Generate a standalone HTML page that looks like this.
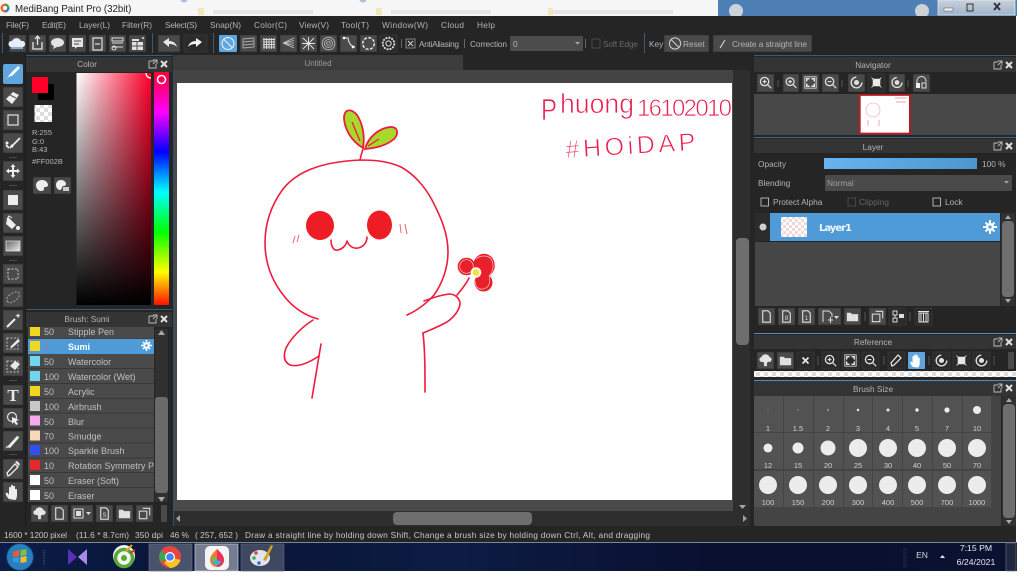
<!DOCTYPE html>
<html><head><meta charset="utf-8"><title>MediBang Paint Pro</title>
<style>
html,body{margin:0;padding:0;background:#fff;width:1024px;height:583px;overflow:hidden}
svg{display:block;position:absolute;left:0;top:0;filter:blur(.3px)}
text{font-family:"Liberation Sans",sans-serif;font-size:8.3px;fill:#b4b4b4}
.b{fill:#4a4a4a;stroke:#2c2c2c;stroke-width:.6}
.d{fill:#2b2b2b;stroke:#3c3c3c;stroke-width:.6}
.h{fill:#343434}
.c{text-anchor:middle}
.i{fill:#dedede}
.s{fill:none;stroke:#dedede;stroke-width:1.2}
.w{fill:none;stroke:#b0b0b0;stroke-width:1}
.r{fill:none;stroke:#ee1c3c;stroke-linecap:round;stroke-linejoin:round;stroke-width:1.6}
.n{font-size:9px;fill:#c0c0c0}
.z{font-size:7.5px;fill:#d0d0d0;text-anchor:middle}
.hw{fill:#ee1c4c;stroke:#fff;stroke-width:.7}
</style></head><body>
<svg width="1024" height="583" viewBox="0 0 1024 583" xmlns="http://www.w3.org/2000/svg">
<defs>
<linearGradient id="gw" x1="0" x2="1" y1="0" y2="0"><stop offset="0" stop-color="#fff"/><stop offset="1" stop-color="#ff002b"/></linearGradient>
<linearGradient id="gk" x1="0" x2="0" y1="0" y2="1"><stop offset="0" stop-color="#000" stop-opacity="0"/><stop offset="1" stop-color="#000"/></linearGradient>
<linearGradient id="gh" x1="0" x2="0" y1="0" y2="1"><stop offset="0" stop-color="#ff0030"/><stop offset=".172" stop-color="#ff00ff"/><stop offset=".343" stop-color="#0000ff"/><stop offset=".515" stop-color="#00ffff"/><stop offset=".687" stop-color="#00ff00"/><stop offset=".858" stop-color="#ffff00"/><stop offset="1" stop-color="#ff1000"/></linearGradient>
<linearGradient id="gt" x1="0" x2="1" y1="0" y2="0"><stop offset="0" stop-color="#0b1d48"/><stop offset=".2" stop-color="#0a1436"/><stop offset=".45" stop-color="#0c1c44"/><stop offset=".7" stop-color="#0a1030"/><stop offset="1" stop-color="#0b1130"/></linearGradient>
<linearGradient id="gb" x1="0" x2="1" y1="0" y2="0"><stop offset="0" stop-color="#68b4ee"/><stop offset="1" stop-color="#4d96d0"/></linearGradient>
<linearGradient id="gg" x1="0" x2="1" y1="0" y2="1"><stop offset="0" stop-color="#666"/><stop offset="1" stop-color="#eee"/></linearGradient>
<linearGradient id="gwc" x1="0" x2="0" y1="0" y2="1"><stop offset="0" stop-color="#c8d2dc"/><stop offset="1" stop-color="#9fb2c6"/></linearGradient>
<pattern id="chk" width="8" height="8" patternUnits="userSpaceOnUse"><rect width="8" height="8" fill="#fff"/><rect width="4" height="4" fill="#ddd"/><rect x="4" y="4" width="4" height="4" fill="#ddd"/></pattern>
<pattern id="chp" width="6" height="6" patternUnits="userSpaceOnUse"><rect width="6" height="6" fill="#fff"/><rect width="3" height="3" fill="#f0d8d8"/><rect x="3" y="3" width="3" height="3" fill="#f0d8d8"/></pattern>
<symbol id="doc" viewBox="0 0 18 18"><path d="M5 3h5.5L13 5.5V15H5z" fill="none" stroke="#dedede" stroke-width="1.2"/></symbol>
<symbol id="up" viewBox="0 0 18 18"><circle cx="9" cy="7" r="4.6" fill="#e4e4e4"/><circle cx="5" cy="8" r="2.5" fill="#e4e4e4"/><circle cx="13" cy="8" r="2.5" fill="#e4e4e4"/><path d="M7.5 10h3v5h-3z" fill="#e4e4e4"/></symbol>
<symbol id="folder" viewBox="0 0 18 18"><path d="M3 5h4l1.5 1.5H15V14H3z" fill="#e0e0e0"/></symbol>
<symbol id="copy" viewBox="0 0 18 18"><path d="M7 3.5h7.5V11M3.5 6.5h8v8h-8z" fill="none" stroke="#dedede" stroke-width="1.1"/></symbol>
<symbol id="zi" viewBox="0 0 18 18"><circle cx="8" cy="8" r="4.4" fill="none" stroke="#dedede" stroke-width="1.4"/><path d="M11.2 11.2L15 15M6 8h4M8 6v4" stroke="#dedede" stroke-width="1.3"/></symbol>
<symbol id="zo" viewBox="0 0 18 18"><circle cx="8" cy="8" r="4.4" fill="none" stroke="#dedede" stroke-width="1.4"/><path d="M11.2 11.2L15 15M6 8h4" stroke="#dedede" stroke-width="1.3"/></symbol>
<symbol id="fit" viewBox="0 0 18 18"><rect x="3" y="3" width="12" height="12" fill="none" stroke="#dedede" stroke-width=".9"/><path d="M5 8V5h3M13 8V5h-3M5 10v3h3M13 10v3h-3" fill="none" stroke="#fff" stroke-width="1.3"/></symbol>
<symbol id="rot" viewBox="0 0 18 18"><circle cx="9" cy="9" r="5.6" fill="none" stroke="#dedede" stroke-width="1.5" stroke-dasharray="26 9"/><circle cx="9" cy="9" r="2.7" fill="#dedede"/></symbol>
<symbol id="fill" viewBox="0 0 18 18"><path d="M3 3l3 2h6l3-2-2 3v6l2 3-3-2H6l-3 2 2-3V6z" fill="#e8e8e8"/></symbol>
<symbol id="gear" viewBox="0 0 14 14"><g fill="#fff"><circle cx="7" cy="7" r="4"/><path d="M6 0h2v14H6zM0 6h14v2H0z"/><path d="M1.8 3.2l1.4-1.4 9 9-1.4 1.4zM10.800 1.800l1.400 1.400-9 9-1.400-1.400z"/></g><circle cx="7" cy="7" r="1.6" fill="#4e9bd8"/></symbol>
</defs>

<!-- title bar -->
<rect x="0" y="0" width="1017" height="16" fill="#f6f6f6"/>
<circle cx="184" cy="-1" r="3.500" fill="#a8c0d8"/><circle cx="363" cy="-1" r="3.500" fill="#a8c0d8"/>
<rect x="198" y="8" width="6" height="7" fill="#f0e8b8"/><rect x="376" y="8" width="6" height="7" fill="#f0e8b8"/>
<rect x="213" y="10" width="100" height="4" fill="#e6e6e6"/><rect x="391" y="10" width="100" height="4" fill="#e6e6e6"/>
<rect x="553" y="10" width="120" height="4" fill="#e6e6e6"/><rect x="548" y="8" width="5" height="7" fill="#f0e8b8"/>
<rect x="718" y="0" width="299" height="16" fill="#4f80b5"/>
<circle cx="736" cy="11" r="7" fill="#ccd2d8"/><circle cx="922" cy="11" r="7" fill="#ccd2d8"/>
<rect x="938" y="0" width="77" height="15" fill="url(#gwc)" stroke="#e8eef4" stroke-width=".7"/>
<path d="M967 4h6v7h-6z" fill="none" stroke="#333" stroke-width="1"/><rect x="944" y="8" width="9" height="3" fill="#f0f0f0" stroke="#556" stroke-width=".5"/>
<path d="M994 3l6 7M1000 3l-6 7" stroke="#334" stroke-width="2"/>
<circle cx="5" cy="8" r="4.500" fill="#ef6a2c"/><path d="M5 3.500a4.500 4.500 0 0 1 4.500 4.500H5z" fill="#3aa85c"/><path d="M5 8h4.500a4.500 4.500 0 0 1-4.500 4.500z" fill="#3a78d8"/><circle cx="5" cy="8" r="2" fill="#fff"/>
<text x="15" y="12" style="font-size:9.700px;fill:#222">MediBang Paint Pro (32bit)</text>

<!-- main dark -->
<rect x="0" y="16" width="1016" height="527" fill="#252525"/>
<!-- menu -->
<text x="6" y="28" textLength="23">File(F)</text><text x="42" y="28" textLength="24">Edit(E)</text><text x="79" y="28" textLength="31">Layer(L)</text><text x="122" y="28" textLength="30">Filter(R)</text><text x="165" y="28" textLength="32">Select(S)</text><text x="210" y="28" textLength="31">Snap(N)</text><text x="254" y="28" textLength="33">Color(C)</text><text x="299" y="28" textLength="30">View(V)</text><text x="341" y="28" textLength="28">Tool(T)</text><text x="382" y="28" textLength="46">Window(W)</text><text x="441" y="28" textLength="23">Cloud</text><text x="477" y="28" textLength="18">Help</text>

<!-- top toolbar -->
<rect x="2" y="33" width="1" height="20" fill="#3c5a72"/>
<rect class="b" x="9" y="35" width="17" height="17"/><path d="M11 47a3 3 0 0 1 1-6 5 5 0 0 1 9 0 3 3 0 0 1 2 6z" fill="#e8eef6"/><path d="M11 47h12v2H11z" fill="#7eb4e4"/>
<rect class="b" x="29" y="35" width="17" height="17"/><path d="M33 42v7h9v-7M37.500 45v-8M35 39l2.500-3 2.500 3" fill="none" stroke="#e4e4e4" stroke-width="1.300"/>
<rect class="b" x="49" y="35" width="17" height="17"/><ellipse cx="57.500" cy="42.500" rx="6.500" ry="4.500" fill="#e4e4e4"/><path d="M54 46l-1 3 4-2z" fill="#e4e4e4"/>
<rect class="b" x="69" y="35" width="17" height="17"/><path d="M72 38h11v9h-6l-2 2v-2h-3z" fill="#e4e4e4"/><path d="M74 41h7M74 44h5" stroke="#4c4c4c"/>
<rect class="b" x="89" y="35" width="17" height="17"/><path d="M93 38h9v12h-9z" fill="none" stroke="#dedede" stroke-width="1.200"/><path d="M95 44h5" stroke="#dedede" stroke-width="1.200"/>
<rect class="b" x="109" y="35" width="17" height="17"/><path d="M112 38h11v3h-11zM112 43h11M112 47h11" fill="none" stroke="#dedede"/><circle cx="114" cy="48" r="2" fill="none" stroke="#dedede"/>
<rect class="b" x="129" y="35" width="17" height="17"/><path d="M132 42h11v8h-11zM132 39h7v2h-7z" fill="#e2e2e2"/><path d="M137 42v8M132 46h11" stroke="#4c4c4c"/><circle cx="143" cy="38" r="1" fill="#e2e2e2"/>
<rect x="152" y="33" width="1" height="20" fill="#3c5a72"/>
<rect class="b" x="158" y="35" width="22" height="17"/><path d="M163 42l6-4v3c4 0 7 2 8 6-2-2-4-3-8-3v3z" fill="#e8e8e8"/>
<rect class="d" x="184" y="35" width="23" height="17"/><path d="M202 42l-6-4v3c-4 0-7 2-8 6 2-2 4-3 8-3v3z" fill="#f2f2f2"/>
<rect x="213" y="33" width="1" height="20" fill="#3c5a72"/>
<rect x="219" y="35" width="18" height="17" rx="1" fill="#5ea6dd"/><circle cx="228" cy="43.500" r="6" fill="none" stroke="#e8f2fa" stroke-width="1.100"/><path d="M224 39.500l8 8" stroke="#e8f2fa" stroke-width="1.100"/>
<rect class="b" x="240" y="35" width="17" height="17"/><path d="M243 39l11-1M243 42l11-1M243 45l11-1M243 48l11-1M243 39v9M254 38v9" fill="none" stroke="#a8a8a8" stroke-width=".9"/>
<rect class="b" x="260" y="35" width="17" height="17"/><path d="M264 38v11M266.500 38v11M269 38v11M271.500 38v11M274 38v11M263 39.500h12M263 42h12M263 44.500h12M263 47h12" stroke="#dcdcdc" stroke-width=".9"/>
<rect class="b" x="280" y="35" width="17" height="17"/><path d="M283 43l11-5M283 43l11-2.500M283 43h11M283 43l11 2.500M283 43l11 5" stroke="#c4c4c4" stroke-width=".8"/>
<rect class="b" x="300" y="35" width="17" height="17"/><path d="M303 38l11 11M314 38l-11 11M308.500 37v13M302 43.500h13" stroke="#e4e4e4" stroke-width=".9"/>
<rect class="b" x="320" y="35" width="17" height="17"/><circle cx="328.500" cy="43.500" r="6.300" class="w"/><circle cx="328.500" cy="43.500" r="4" class="w"/><circle cx="328.500" cy="43.500" r="1.800" class="w"/>
<rect class="b" x="340" y="35" width="17" height="17"/><path d="M344 38h4l1 4c1 3 3 4 6 5" fill="none" stroke="#e4e4e4" stroke-width="1.100"/><circle cx="344" cy="38" r="1.300" fill="#fff"/><circle cx="353" cy="47" r="1.300" fill="#fff"/>
<rect class="b" x="360" y="35" width="17" height="17"/><circle cx="368.500" cy="43.500" r="5.800" fill="none" stroke="#f0f0f0" stroke-width="1.400" stroke-dasharray="3 1.500"/>
<rect class="d" x="380" y="35" width="17" height="17"/><circle cx="388.500" cy="43.500" r="5.800" fill="none" stroke="#e0e0e0" stroke-width="1.800" stroke-dasharray="2 1"/><circle cx="388.500" cy="43.500" r="2.600" fill="none" stroke="#e0e0e0"/>
<rect x="401" y="39" width="1" height="9" fill="#666"/>
<rect x="406" y="39" width="9" height="9" fill="#2a2a2a" stroke="#9a9a9a" stroke-width=".8"/><path d="M408 41l5 5M413 41l-5 5" stroke="#d0d0d0"/>
<text x="419" y="47" textLength="40">AntiAliasing</text>
<rect x="464" y="39" width="1" height="9" fill="#666"/>
<text x="470" y="47" textLength="37">Correction</text>
<rect x="510" y="36" width="73" height="15" rx="1" fill="#4c4c4c"/><text x="513" y="47">0</text><path d="M575 42h5l-2.500 2.500z" fill="#aaa"/>
<rect x="585" y="39" width="1" height="9" fill="#666"/>
<rect x="592" y="39" width="8" height="9" fill="none" stroke="#484848"/>
<text x="603" y="47" style="fill:#6a6a6a" textLength="35">Soft Edge</text>
<rect x="644" y="33" width="1" height="20" fill="#3c5a72"/>
<text x="649" y="47">Key</text>
<rect class="b" x="664" y="35" width="45" height="17"/><circle cx="675" cy="43.500" r="5.600" fill="none" stroke="#d0d0d0" stroke-width="1"/><path d="M671 39.500l8 8" stroke="#d0d0d0"/><text x="683" y="47">Reset</text>
<rect class="b" x="713" y="35" width="99" height="17"/><path d="M720 48l5-8" stroke="#d8d8d8" stroke-width="1.100"/><text x="732" y="47" textLength="75">Create a straight line</text>

<!-- left toolbar -->
<rect x="25" y="55" width="1" height="472" fill="#1c1c1c"/>
<rect x="3" y="64" width="20" height="20" rx="2" fill="#5ea6dd"/><path d="M7 80c0-3 3-4 5-4l8-8-2-2-8 8c-1 2-3 3-3 6z" fill="#fff"/>
<rect class="b" x="3" y="87" width="20" height="20"/><path d="M6 99l7-7 6 3-7 9z" fill="#eee"/><path d="M10 95l6 3" stroke="#4c4c4c"/>
<rect class="b" x="3" y="110" width="20" height="20"/><rect x="8" y="115" width="10" height="10" fill="none" stroke="#d8d8d8" stroke-width="1.300"/>
<rect class="b" x="3" y="133" width="20" height="20"/><path d="M6 145l3 3M10 148l10-10" stroke="#eee" stroke-width="1.800"/><circle cx="7" cy="143" r="1.500" fill="#eee"/><circle cx="12" cy="146" r="1.500" fill="#eee"/>
<rect x="9" y="157" width="8" height="1" fill="#4a4a4a"/>
<rect class="b" x="3" y="161" width="20" height="20"/><path d="M13 164l2.500 3h-1.500v3h3v-1.500l3 2.500-3 2.500V172h-3v3h1.500l-2.500 3-2.500-3h1.500v-3h-3v1.500l-3-2.500 3-2.500V170h3v-3h-1.500z" fill="#eee"/>
<rect x="9" y="185" width="8" height="1" fill="#4a4a4a"/>
<rect class="b" x="3" y="190" width="20" height="20"/><rect x="8" y="195" width="10" height="10" fill="#ececec"/>
<rect class="b" x="3" y="213" width="20" height="20"/><path d="M8 217l8 8-4 4-6-5 1-5z" fill="#eee"/><path d="M7 219l2-3 3 2" fill="none" stroke="#eee"/><circle cx="18" cy="228" r="2" fill="#eee"/>
<rect class="b" x="3" y="236" width="20" height="20"/><rect x="6" y="241" width="14" height="10" fill="url(#gg)" stroke="#ddd" stroke-width=".8"/>
<rect x="9" y="260" width="8" height="1" fill="#4a4a4a"/>
<rect class="b" x="3" y="264" width="20" height="20"/><rect x="8" y="269" width="10" height="10" fill="none" stroke="#c8c8c8" stroke-dasharray="2 1.500"/>
<rect class="b" x="3" y="287" width="20" height="20"/><path d="M8 302c-3-3 0-6 3-8s7-3 8-1 0 5-3 7-6 4-8 2z" fill="none" stroke="#a8a8a8" stroke-dasharray="2 1.500"/>
<rect class="b" x="3" y="310" width="20" height="20"/><path d="M7 327l8-8" stroke="#eee" stroke-width="2"/><path d="M18 313l.7 2 2 .7-2 .7-.7 2-.7-2-2-.7 2-.7z" fill="#eee"/>
<rect class="b" x="3" y="333" width="20" height="20"/><rect x="7" y="338" width="11" height="11" fill="none" stroke="#bbb" stroke-dasharray="2 1.500"/><path d="M10 347l8-8 2 2-8 7z" fill="#e8e8e8"/>
<rect class="b" x="3" y="356" width="20" height="20"/><rect x="7" y="361" width="11" height="11" fill="none" stroke="#bbb" stroke-dasharray="2 1.500"/><path d="M10 366l5-5 5 3-5 6z" fill="#e8e8e8"/>
<rect x="9" y="380" width="8" height="1" fill="#4a4a4a"/>
<rect class="b" x="3" y="385" width="20" height="20"/><text x="13" y="401" class="c" style="font:bold 17px 'Liberation Serif',serif;fill:#e8e8e8">T</text>
<rect class="b" x="3" y="408" width="20" height="20"/><circle cx="12" cy="417" r="4.500" class="s"/><path d="M12 417l7 3-3 1 2 3-2 1-2-3-2 2z" fill="#eee"/>
<rect class="b" x="3" y="431" width="20" height="20"/><path d="M7 447l9-10c2-2 4 0 2 2l-8 9z" fill="#eee"/><path d="M6 448l2-2" stroke="#eee"/>
<rect x="9" y="454" width="8" height="1" fill="#4a4a4a"/>
<rect class="b" x="3" y="459" width="20" height="20"/><path d="M8 476l-1-3 8-9 3 3-8 8z" fill="none" stroke="#eee" stroke-width="1.300"/><path d="M15 462l2-1 3 3-1 2z" fill="#eee"/>
<rect class="b" x="3" y="482" width="20" height="20"/><path d="M9 499c-2-2-4-5-3-6s2 0 3 2v-7c0-1.500 2-1.500 2 0v4-6c0-1.500 2-1.500 2 0v6-5c0-1.500 2-1.500 2 0v6-3c0-1.500 2-1.500 2 0v5c0 3-1 5-2 5z" fill="#eee"/>

<!-- color panel -->
<rect x="26" y="55" width="146" height="1" fill="#3c5a72"/>
<rect class="h" x="26" y="57" width="146" height="15"/>
<text x="87" y="67" class="c">Color</text>
<path d="M149 61h5m-5 0v7h7v-4M153 60h4v4M157 60l-4 4" fill="none" stroke="#bdbdbd" stroke-width=".9"/>
<path d="M161 61l6 6M167 61l-6 6" stroke="#e0e0e0" stroke-width="2"/>
<rect x="38" y="84" width="16" height="16" fill="#000"/>
<rect x="32" y="77" width="16" height="16" fill="#ff002b"/>
<rect x="34.500" y="105" width="17.500" height="17" fill="url(#chk)"/>
<text x="32" y="135" style="font-size:7.500px">R:255</text><text x="32" y="144" style="font-size:7.500px">G:0</text><text x="32" y="152" style="font-size:7.500px">B:43</text>
<text x="32" y="164" style="font-size:7.500px">#FF002B</text>
<rect class="b" x="33" y="177" width="18" height="17"/><path d="M42 180c4 0 6 3 6 5s-2 2-3 2-1 1-1 2-1 2-3 2c-3 0-5-3-5-6s3-5 6-5z" fill="#eee"/>
<rect class="b" x="54" y="177" width="17" height="17"/><path d="M61 180c3 0 5 2 5 4s-2 2-3 2-1 4-3 4-4-2-4-5 2-5 5-5z" fill="#eee"/><rect x="63" y="187" width="6" height="4" fill="#ccc"/>
<rect x="76.500" y="73" width="74.500" height="232" fill="url(#gw)"/>
<rect x="76.500" y="73" width="74.500" height="232" fill="url(#gk)"/>
<rect x="154" y="72" width="15" height="233" fill="url(#gh)"/>
<circle cx="161.500" cy="79.500" r="4" fill="none" stroke="#fff" stroke-width="1.600"/>
<path d="M146 73c0 3 2 5 5 5" fill="none" stroke="#fff" stroke-width="1.300"/>

<!-- brush panel -->
<rect x="26" y="309" width="146" height="1" fill="#3c5a72"/>
<rect class="h" x="26" y="312" width="146" height="15"/>
<text x="87" y="322" class="c">Brush: Sumi</text>
<path d="M149 316h5m-5 0v7h7v-4M153 315h4v4M157 315l-4 4" fill="none" stroke="#bdbdbd" stroke-width=".9"/>
<path d="M161 316l6 6M167 316l-6 6" stroke="#e0e0e0" stroke-width="2"/>
<rect x="28" y="327" width="126" height="175" fill="#4a4a4a"/>
<path d="M28 339h126M28 368.500h126M28 383.500h126M28 398.500h126M28 413h126M28 428h126M28 443h126M28 458h126M28 472.500h126M28 487.500h126" stroke="#333" stroke-width=".8"/>
<rect x="28" y="339" width="126" height="15" fill="#4e9bd8"/>
<rect x="30" y="327" width="10" height="9" fill="#f0d820"/><text x="44" y="335" class="n">50</text><text x="68" y="335" class="n">Stipple Pen</text>
<rect x="30" y="341" width="10" height="10" fill="#f0d820"/><text x="44" y="350" class="n" style="fill:#d86090">7</text><text x="68" y="350" class="n" style="fill:#fff;font-weight:bold">Sumi</text><use href="#gear" x="141" y="340" width="11" height="11"/>
<rect x="30" y="356" width="10" height="10" fill="#6fd8f0"/><text x="44" y="365" class="n">50</text><text x="68" y="365" class="n">Watercolor</text>
<rect x="30" y="371" width="10" height="10" fill="#6fd8f0"/><text x="44" y="380" class="n">100</text><text x="68" y="380" class="n">Watercolor (Wet)</text>
<rect x="30" y="386" width="10" height="10" fill="#f0d820"/><text x="44" y="395" class="n">50</text><text x="68" y="395" class="n">Acrylic</text>
<rect x="30" y="401" width="10" height="10" fill="#c8c8c8"/><text x="44" y="410" class="n">100</text><text x="68" y="410" class="n">Airbrush</text>
<rect x="30" y="415.500" width="10" height="10" fill="#f8a8f0"/><text x="44" y="425" class="n">50</text><text x="68" y="425" class="n">Blur</text>
<rect x="30" y="430.500" width="10" height="10" fill="#f8d8b8"/><text x="44" y="439.500" class="n">70</text><text x="68" y="439.500" class="n">Smudge</text>
<rect x="30" y="445" width="10" height="10" fill="#3050f0"/><text x="44" y="454" class="n">100</text><text x="68" y="454" class="n">Sparkle Brush</text>
<rect x="30" y="460" width="10" height="10" fill="#e82828"/><text x="44" y="469" class="n">10</text><text x="68" y="469" class="n" textLength="86" lengthAdjust="spacing">Rotation Symmetry P</text>
<rect x="30" y="475" width="10" height="10" fill="#fff"/><text x="44" y="484" class="n">50</text><text x="68" y="484" class="n">Eraser (Soft)</text>
<rect x="30" y="490" width="10" height="10" fill="#fff"/><text x="44" y="499" class="n">50</text><text x="68" y="499" class="n">Eraser</text>
<rect x="155" y="329" width="13" height="173" rx="2" fill="#303030"/>
<rect x="155" y="397" width="13" height="96" rx="3" fill="#6a6a6a"/>
<path d="M158 335l3.500-5 3.500 5zM158 497l3.500 5 3.500-5z" fill="#a8a8a8"/>
<rect class="b" x="31" y="505" width="17" height="17"/><use href="#up" x="31" y="505" width="17" height="17"/>
<rect class="b" x="51" y="505" width="17" height="17"/><use href="#doc" x="51" y="505" width="17" height="17"/>
<rect class="b" x="71" y="505" width="22" height="17"/><rect x="74" y="509" width="9" height="9" fill="none" stroke="#ddd"/><rect x="76" y="511" width="5" height="5" fill="#ddd"/><path d="M86 512h5l-2.500 3z" fill="#ddd"/>
<rect class="b" x="96" y="505" width="17" height="17"/><use href="#doc" x="96" y="505" width="17" height="17"/><text x="104.500" y="517" class="c" style="font-size:6px;fill:#ddd">S</text>
<rect class="b" x="116" y="505" width="17" height="17"/><use href="#folder" x="116" y="505" width="17" height="17"/>
<rect class="b" x="136" y="505" width="17" height="17"/><use href="#copy" x="136" y="505" width="17" height="17"/>
<rect x="161" y="505" width="6" height="17" rx="1" fill="#4a4a4a"/>

<!-- canvas tab + area -->
<rect x="173" y="55" width="290" height="15" fill="#3c3c3c"/>
<text x="318" y="66" class="c" style="fill:#9a9a9a;font-size:8px">Untitled</text>
<rect x="173" y="70" width="577" height="441" fill="#4a4a4a"/>
<rect x="173" y="70" width="577" height="13" fill="#444"/>
<rect x="177" y="83" width="555" height="417" fill="#fff"/>
<rect x="733" y="70" width="17" height="441" fill="#2e2e2e"/>
<rect x="736" y="238" width="13" height="107" rx="4" fill="#6e6e6e"/>
<path d="M739 505h7l-3.500 4z" fill="#a8a8a8"/>
<rect x="173" y="511" width="577" height="15" fill="#2e2e2e"/>
<rect x="173" y="70" width="1" height="456" fill="#2e5068"/>
<rect x="393" y="512" width="139" height="13" rx="4" fill="#6e6e6e"/>
<path d="M180 515v7l-4-3.500zM743 515v7l4-3.500z" fill="#a0a0a0"/>

<!-- drawing -->
<path class="r" d="M318 319C307 316 295 310 284 296C272 281 265 263 265 243C265 222 272 204 283 189C296 173 318 162 360 160C378 160 390 162 401 167C414 174 425 187 432 200C442 219 448 235 448 252C448 268 442 284 434 295C425 305 416 311 407 315"/>
<path class="r" d="M360 160C361 155 362 152 363 149"/>
<path class="r" d="M424 301C434 297 441 295 449 294C456 294 460 299 460 304C459 311 454 317 447 322C438 327 430 330 423 333"/>
<path class="r" d="M423 333C425 350 425 370 425 392"/>
<path class="r" d="M313 320C302 327 291 338 286 348C283 356 284 362 290 365C297 367 307 364 319 356"/>
<path class="r" d="M321 344C318 362 315 380 312 398"/>
<path d="M363 148C351 141 344 128 344 117C345 108 352 109 357 115C363 124 365 137 363 148Z" fill="#a8d82c" stroke="#ee1c3c" stroke-width="1.800"/>
<path d="M365 149C368 137 380 127 392 127C399 128 398 135 394 139C386 146 375 148 365 149Z" fill="#a8d82c" stroke="#ee1c3c" stroke-width="1.800"/>
<path d="M352 122L360 141M368 146L379 139" stroke="#ee1c3c" stroke-width="1.300" fill="none"/>
<ellipse cx="320" cy="225.500" rx="14" ry="14.500" fill="#ee1c24"/>
<ellipse cx="379.500" cy="225" rx="12.500" ry="14.500" fill="#ee1c24"/>
<path class="r" d="M331 240C331 247 334 251 338 250C342 249 346 246 347 241C349 246 353 249 358 248C363 247 367 243 367 237"/>
<path d="M295 236L293 243M299 235L297 242M400 224L401 233M405 224L407 234" stroke="#f06070" stroke-width="1" fill="none"/>
<path class="r" d="M469 278C465 286 461 290 457 295"/>
<ellipse cx="466.500" cy="266.500" rx="8.800" ry="8.800" fill="#e8202a"/>
<ellipse cx="484" cy="265.500" rx="10.800" ry="11.800" fill="#e8202a"/>
<circle cx="483.500" cy="282.500" r="9" fill="#e8202a"/>
<circle cx="466.500" cy="266.500" r="6.800" fill="none" stroke="#f8c8c8" stroke-width=".7"/>
<path d="M476 259c4-4 12-4 15 0s3 12-2 17M489 276c2 6 0 12-6 13s-8-4-8-8" fill="none" stroke="#f8c8c8" stroke-width=".7"/>
<circle cx="476" cy="272.500" r="5.300" fill="#fff"/><circle cx="476" cy="272.500" r="3.300" fill="#f8e030"/>
<text x="541" y="120" class="hw" style="font-size:31px" textLength="16" lengthAdjust="spacingAndGlyphs">P</text>
<text x="560" y="113" class="hw" style="font-size:28px" textLength="74" lengthAdjust="spacingAndGlyphs">huong</text>
<text x="637" y="116" class="hw" style="font-size:24px" textLength="95" lengthAdjust="spacing">16102010</text>
<text x="566" y="158" textLength="130" lengthAdjust="spacing" transform="rotate(-3.500 566 158)" class="hw" style="font-size:25px">#HOiDAP</text>

<!-- right panels -->
<rect x="754" y="55" width="262" height="1" fill="#3c5a72"/>
<rect class="h" x="754" y="57" width="262" height="15"/>
<text x="873" y="68" class="c">Navigator</text>
<path d="M994 62h4m-4 0v7h7v-4M998 61h4v4M1002 61l-4 4" fill="none" stroke="#bdbdbd" stroke-width=".9"/>
<path d="M1006 62l6 6M1012 62l-6 6" stroke="#e0e0e0" stroke-width="2"/>
<rect class="b" x="757" y="74" width="17" height="18"/><use href="#zi" x="757" y="74" width="17" height="17"/>
<rect class="b" x="783" y="74" width="16" height="18"/><use href="#zi" x="783" y="74" width="16" height="17"/>
<rect class="b" x="802" y="74" width="17" height="18"/><use href="#fit" x="802" y="74" width="17" height="17"/>
<rect class="b" x="822" y="74" width="17" height="18"/><use href="#zo" x="822" y="74" width="17" height="17"/>
<rect class="b" x="848" y="74" width="17" height="18"/><use href="#rot" x="848" y="74" width="17" height="17"/>
<rect class="d" x="868" y="74" width="17" height="18"/><use href="#fill" x="868" y="74" width="17" height="17"/>
<rect class="b" x="889" y="74" width="16" height="18"/><use href="#rot" x="889" y="74" width="16" height="17"/>
<rect class="b" x="913" y="74" width="17" height="18"/><path d="M917 86v-5a4.500 4.500 0 0 1 9 0v1" fill="none" stroke="#dedede"/><rect x="916" y="83" width="4" height="5" fill="#eee"/><rect x="922" y="83" width="4" height="5" fill="none" stroke="#dedede"/>
<path d="M778 80v7M842 80v7M908 80v7" stroke="#555"/>
<rect x="754" y="94" width="262" height="41" fill="#484848"/>
<rect x="859.800" y="95" width="50" height="38.500" fill="#fff" stroke="#c01420" stroke-width="1.700"/>
<circle cx="873" cy="110" r="7" fill="none" stroke="#f0a0a8" stroke-width=".6"/><path d="M868 120v6M879 120v6M895 98h12M896 102h10" stroke="#f08090" stroke-width=".7"/>
<rect x="754" y="137" width="262" height="1" fill="#3c6a8c"/>
<rect class="h" x="754" y="139" width="262" height="14"/>
<text x="873" y="150" class="c">Layer</text>
<path d="M994 143h4m-4 0v7h7v-4M998 142h4v4M1002 142l-4 4" fill="none" stroke="#bdbdbd" stroke-width=".9"/>
<path d="M1006 143l6 6M1012 143l-6 6" stroke="#e0e0e0" stroke-width="2"/>
<text x="758" y="167">Opacity</text>
<rect x="824" y="158" width="153" height="11" fill="url(#gb)"/>
<text x="982" y="167">100 %</text>
<text x="758" y="186">Blending</text>
<rect x="825" y="175" width="187" height="16" rx="1" fill="#4a4a4a"/>
<text x="827" y="186" style="fill:#a0a0a0">Normal</text><path d="M1004 181h5l-2.500 2.500z" fill="#aaa"/>
<rect x="761" y="198" width="7.500" height="8" fill="none" stroke="#b0b0b0"/><text x="773" y="205">Protect Alpha</text>
<rect x="848" y="198" width="7.500" height="8" fill="none" stroke="#484848"/><text x="859" y="205" style="fill:#666">Clipping</text>
<rect x="933" y="198" width="7.500" height="8" fill="none" stroke="#b0b0b0"/><text x="945" y="205">Lock</text>
<rect x="755" y="213" width="15" height="28" fill="#2c2c2c"/><circle cx="763" cy="227" r="3.500" fill="#d0d0d0"/>
<rect x="770" y="213" width="230" height="28" fill="#4e9bd8"/>
<rect x="781" y="217" width="26" height="20" fill="url(#chp)"/>
<text x="819" y="231" style="font:bold 10px 'DejaVu Sans',sans-serif;fill:#f0f6fc" textLength="33">Layer1</text>
<use href="#gear" x="983" y="220" width="14" height="14"/>
<rect x="755" y="241" width="245" height="65" fill="#464646"/>
<rect x="755" y="241" width="245" height="1" fill="#222"/>
<rect x="1001" y="213" width="14" height="93" fill="#303030"/>
<rect x="1002" y="221" width="12" height="76" rx="4" fill="#6e6e6e"/>
<path d="M1005 219l3-4 3 4zM1005 299l3 4 3-4z" fill="#a8a8a8"/>
<rect class="b" x="758" y="308" width="17" height="17"/><use href="#doc" x="758" y="308" width="17" height="17"/>
<rect class="b" x="778" y="308" width="17" height="17"/><use href="#doc" x="778" y="308" width="17" height="17"/><text x="786.500" y="320" class="c" style="font-size:6px;fill:#ddd">8</text>
<rect class="b" x="798" y="308" width="17" height="17"/><use href="#doc" x="798" y="308" width="17" height="17"/><text x="806.500" y="320" class="c" style="font-size:6px;fill:#ddd">1</text>
<rect class="b" x="818" y="308" width="23" height="17"/><path d="M823 322v-11h6l3 3v3M828 320h5M830.500 317v6" fill="none" stroke="#ddd"/><path d="M834 316h5l-2.500 3z" fill="#ddd"/>
<rect class="b" x="844" y="308" width="17" height="17"/><use href="#folder" x="844" y="308" width="17" height="17"/>
<rect class="b" x="869" y="308" width="17" height="17"/><use href="#copy" x="869" y="308" width="17" height="17"/>
<rect class="d" x="889" y="308" width="17" height="17"/><path d="M893 311h4v4h-4zM893 318h4v4h-4z" fill="none" stroke="#ddd"/><path d="M899 314h5v4h-5z" fill="#ddd"/><path d="M895 315v3" stroke="#ddd"/>
<rect class="d" x="915" y="308" width="17" height="17"/><path d="M919 313h9v9h-9zM918 311.500h11M921 313v9M926 313v9M923.500 313v9" fill="none" stroke="#e6e6e6"/>
<path d="M865 312v9M910 312v9" stroke="#555"/>
<rect x="754" y="333" width="262" height="1" fill="#4d8cbc"/>
<rect class="h" x="754" y="335" width="262" height="14"/>
<text x="873" y="345" class="c">Reference</text>
<path d="M994 339h4m-4 0v7h7v-4M998 338h4v4M1002 338l-4 4" fill="none" stroke="#bdbdbd" stroke-width=".9"/>
<path d="M1006 339l6 6M1012 339l-6 6" stroke="#e0e0e0" stroke-width="2"/>
<rect class="b" x="757" y="352" width="17" height="17"/><use href="#up" x="757" y="352" width="17" height="17"/>
<rect class="b" x="777" y="352" width="17" height="17"/><use href="#folder" x="777" y="352" width="17" height="17"/>
<rect class="d" x="797" y="352" width="17" height="17"/><path d="M802.500 357.500l6 6M808.500 357.500l-6 6" stroke="#e4e4e4" stroke-width="1.800"/>
<rect class="d" x="822" y="352" width="17" height="17"/><use href="#zi" x="822" y="352" width="17" height="17"/>
<rect class="d" x="842" y="352" width="17" height="17"/><use href="#fit" x="842" y="352" width="17" height="17"/>
<rect class="d" x="862" y="352" width="17" height="17"/><use href="#zo" x="862" y="352" width="17" height="17"/>
<rect class="d" x="888" y="352" width="17" height="17"/><path d="M892 366l-1-3 7-8 3 3-7 7z" fill="none" stroke="#eee" stroke-width="1.200"/>
<rect x="908" y="352" width="17" height="17" rx="1" fill="#5ea6dd"/><path d="M913 367c-2-2-3-4-2.500-5s1.500 0 2 1v-6c0-1.500 1.800-1.500 1.800 0v3-4.500c0-1.500 1.800-1.500 1.800 0v4.500-4c0-1.500 1.800-1.500 1.800 0v5-2.500c0-1.500 1.800-1.500 1.800 0v5c0 2-1 4-2 4z" fill="#fff"/>
<rect class="d" x="933" y="352" width="17" height="17"/><use href="#rot" x="933" y="352" width="17" height="17"/>
<rect class="d" x="953" y="352" width="17" height="17"/><use href="#fill" x="953" y="352" width="17" height="17"/>
<rect class="d" x="973" y="352" width="17" height="17"/><use href="#rot" x="973" y="352" width="17" height="17"/>
<path d="M818 356v9M884 356v9M929 356v9M994 356v9" stroke="#555"/>
<rect x="1008" y="352" width="6" height="17" rx="1" fill="#4a4a4a"/>
<rect x="754" y="371" width="262" height="6" fill="url(#chk)"/>
<rect x="754" y="380" width="262" height="1" fill="#4d8cbc"/>
<rect class="h" x="754" y="381" width="262" height="15"/>
<text x="873" y="392" class="c">Brush Size</text>
<path d="M994 385h4m-4 0v7h7v-4M998 384h4v4M1002 384l-4 4" fill="none" stroke="#bdbdbd" stroke-width=".9"/>
<path d="M1006 385l6 6M1012 385l-6 6" stroke="#e0e0e0" stroke-width="2"/>
<rect x="754" y="396" width="247" height="130" fill="#444"/>
<rect x="1002" y="396" width="14" height="130" fill="#303030"/>
<rect x="1003" y="404" width="12" height="114" rx="4" fill="#6e6e6e"/>
<path d="M1006 402l3-4 3 4zM1006 520l3 4 3-4z" fill="#a8a8a8"/>
<rect x="754" y="396" width="29" height="36" fill="#525252"/><rect x="784" y="396" width="29" height="36" fill="#525252"/><rect x="814" y="396" width="29" height="36" fill="#525252"/><rect x="844" y="396" width="28" height="36" fill="#525252"/><rect x="873" y="396" width="29" height="36" fill="#525252"/><rect x="903" y="396" width="29" height="36" fill="#525252"/><rect x="933" y="396" width="29" height="36" fill="#525252"/><rect x="963" y="396" width="28" height="36" fill="#525252"/>
<rect x="754" y="433" width="29" height="36" fill="#525252"/><rect x="784" y="433" width="29" height="36" fill="#525252"/><rect x="814" y="433" width="29" height="36" fill="#525252"/><rect x="844" y="433" width="28" height="36" fill="#525252"/><rect x="873" y="433" width="29" height="36" fill="#525252"/><rect x="903" y="433" width="29" height="36" fill="#525252"/><rect x="933" y="433" width="29" height="36" fill="#525252"/><rect x="963" y="433" width="28" height="36" fill="#525252"/>
<rect x="754" y="471" width="29" height="36" fill="#525252"/><rect x="784" y="471" width="29" height="36" fill="#525252"/><rect x="814" y="471" width="29" height="36" fill="#525252"/><rect x="844" y="471" width="28" height="36" fill="#525252"/><rect x="873" y="471" width="29" height="36" fill="#525252"/><rect x="903" y="471" width="29" height="36" fill="#525252"/><rect x="933" y="471" width="29" height="36" fill="#525252"/><rect x="963" y="471" width="28" height="36" fill="#525252"/>
<g fill="#ececec">
<circle cx="768" cy="410" r=".4"/><circle cx="798" cy="410" r=".5"/><circle cx="828" cy="410" r=".7"/><circle cx="858" cy="410" r="1.200"/><circle cx="888" cy="410" r="1.500"/><circle cx="917" cy="410" r="1.700"/><circle cx="947" cy="410" r="2.600"/><circle cx="977" cy="410" r="4"/>
<circle cx="768" cy="448" r="4.500"/><circle cx="798" cy="448" r="5.500"/><circle cx="828" cy="448" r="7.500"/><circle cx="858" cy="448" r="9"/><circle cx="888" cy="448" r="9"/><circle cx="917" cy="448" r="9"/><circle cx="947" cy="448" r="9"/><circle cx="977" cy="448" r="9"/>
<circle cx="768" cy="485" r="9"/><circle cx="798" cy="485" r="9"/><circle cx="828" cy="485" r="9"/><circle cx="858" cy="485" r="9"/><circle cx="888" cy="485" r="9"/><circle cx="917" cy="485" r="9"/><circle cx="947" cy="485" r="9"/><circle cx="977" cy="485" r="9"/>
</g>
<text x="768" y="431" class="z">1</text><text x="798" y="431" class="z">1.5</text><text x="828" y="431" class="z">2</text><text x="858" y="431" class="z">3</text><text x="888" y="431" class="z">4</text><text x="917" y="431" class="z">5</text><text x="947" y="431" class="z">7</text><text x="977" y="431" class="z">10</text>
<text x="768" y="468" class="z">12</text><text x="798" y="468" class="z">15</text><text x="828" y="468" class="z">20</text><text x="858" y="468" class="z">25</text><text x="888" y="468" class="z">30</text><text x="917" y="468" class="z">40</text><text x="947" y="468" class="z">50</text><text x="977" y="468" class="z">70</text>
<text x="768" y="505" class="z">100</text><text x="798" y="505" class="z">150</text><text x="828" y="505" class="z">200</text><text x="858" y="505" class="z">300</text><text x="888" y="505" class="z">400</text><text x="917" y="505" class="z">500</text><text x="947" y="505" class="z">700</text><text x="977" y="505" class="z">1000</text>

<!-- status -->
<text x="4" y="538" style="fill:#c8c8c8" textLength="63">1600 * 1200 pixel</text>
<text x="76" y="538" style="fill:#c8c8c8" textLength="53">(11.6 * 8.7cm)</text>
<text x="135" y="538" style="fill:#c8c8c8" textLength="28">350 dpi</text>
<text x="170" y="538" style="fill:#c8c8c8">46 %</text>
<text x="195" y="538" style="fill:#c8c8c8" textLength="43">( 257, 652 )</text>
<text x="245" y="538" style="fill:#c8c8c8" textLength="405">Draw a straight line by holding down Shift, Change a brush size by holding down Ctrl, Alt, and dragging</text>

<!-- taskbar -->
<rect x="0" y="543" width="1017" height="28" fill="url(#gt)"/>
<rect x="0" y="542" width="1017" height="1" fill="#7a8798"/>
<circle cx="20" cy="557" r="13.500" fill="#2a7ec0" stroke="#0c3c60"/>
<path d="M13 552l6-2v6l-6 1z" fill="#f05a2a"/><path d="M20.500 550l6-1v6l-6 1z" fill="#7cc040"/><path d="M13 558l6-1v6l-6-1z" fill="#2f9ae0"/><path d="M20.500 557l6-1v6l-6 1z" fill="#f4c020"/>
<path d="M44 550v15" stroke="#33415a" stroke-width="2" stroke-dasharray="1 1"/>
<path d="M68 549l9 8-9 8z" fill="#5b2fb8"/><path d="M87 549l-9 8 9 8z" fill="#a98ae8"/>
<circle cx="124" cy="556" r="11" fill="#f4f4f0"/><circle cx="124" cy="558" r="8.500" fill="none" stroke="#58a838" stroke-width="3.500"/><circle cx="124" cy="558" r="3" fill="#58a838"/><path d="M126 551l6-6" stroke="#e8a820" stroke-width="2"/><path d="M130 553l5-3" stroke="#d04020" stroke-width="2"/>
<rect x="149" y="544" width="43" height="27" fill="#49536c" stroke="#5f6c84" stroke-width=".7"/>
<circle cx="170" cy="557" r="11" fill="#e8453c"/><path d="M170 557l10.500 3a11 11 0 0 1-10.500 8l-6-5z" fill="#f8c520"/><path d="M170 557l-9.500 5a11 11 0 0 1 .5-11z" fill="#34a853"/><circle cx="170" cy="557" r="5" fill="#fff"/><circle cx="170" cy="557" r="3.800" fill="#4285f4"/>
<rect x="195" y="544" width="43" height="27" fill="#757d92" stroke="#c6ccd6" stroke-width=".7"/>
<rect x="205" y="546" width="24" height="24" rx="5" fill="#f4f4f4"/>
<path d="M217 549c4 4 7 7 7 11a7 7 0 0 1-14 0c0-4 3-7 7-11z" fill="#ef7a2c"/><path d="M217 549c4 4 7 7 7 11a7 7 0 0 1-7 7z" fill="#e8305c"/><path d="M212 560a5 5 0 0 0 5 5c2 0 4-2 4-4z" fill="#38b0d8"/><path d="M211 558c3-2 5-1 6 2-3 2-5 2-6-2z" fill="#60c060"/>
<rect x="241" y="544" width="43" height="27" fill="#3e4860" stroke="#566278" stroke-width=".7"/>
<ellipse cx="260" cy="558" rx="10" ry="8" fill="#dfe6f0"/><circle cx="256" cy="553" r="1.800" fill="#e84040"/><circle cx="254" cy="558" r="1.800" fill="#40b040"/><circle cx="259" cy="563" r="1.800" fill="#4060e0"/><path d="M263 560l8-15 2 1-7 15z" fill="#d8a020"/>
<path d="M904 548v20M906 548v20" stroke="#2e3a54" stroke-dasharray="1 1"/>
<text x="922" y="558" class="c" style="font-size:8.500px;fill:#d4d8e0">EN</text>
<path d="M940 558h5l-2.500-3z" fill="#e4e8f0"/>
<text x="976" y="551" class="c" style="font-size:8.700px;fill:#e6eaf0">7:15 PM</text>
<text x="976" y="565" class="c" style="font-size:8.700px;fill:#e6eaf0">6/24/2021</text>
<rect x="1006" y="543" width="10" height="28" fill="#20283e" stroke="#6c7688" stroke-width=".6"/>
</svg>
</body></html>
